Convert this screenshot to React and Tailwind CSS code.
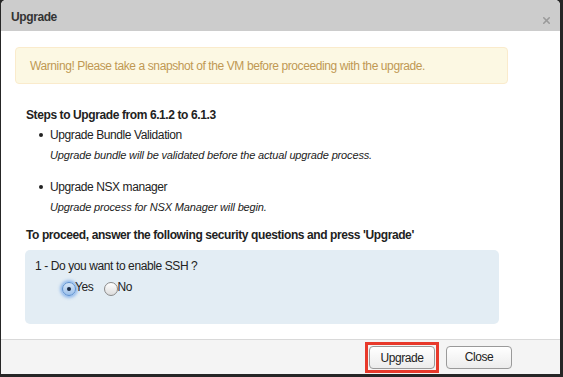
// Upgrade dialog — warning, steps list, security question and footer actions
import { X } from 'lucide-react';

const STEPS = [
  { title: 'Upgrade Bundle Validation', note: 'Upgrade bundle will be validated before the actual upgrade process.' },
  { title: 'Upgrade NSX manager', note: 'Upgrade process for NSX Manager will begin.' },
];

function Radio({ checked, label }) {
  return (
    <label className="flex items-center">
      {checked ? (
        <span className="w-[14px] h-[14px] rounded-full border border-[#5a8fd0] bg-gradient-to-b from-[#d6e6f7] to-[#9cc0ea] shadow-[0_0_3px_2px_rgba(90,150,230,0.6)] flex items-center justify-center">
          <span className="w-[4px] h-[4px] rounded-full bg-[#1b2b44]" />
        </span>
      ) : (
        <span className="w-[14px] h-[14px] rounded-full border border-[#8a8a8a] bg-gradient-to-b from-[#ffffff] to-[#dcdcdc]" />
      )}
      <span className="-ml-[1px] -mt-[5px]">{label}</span>
    </label>
  );
}

export default function App() {
  return (
    <div className="w-[563px] h-[377px] bg-[#262626] pl-[1px] pr-[3px] pb-[3px] font-['Liberation_Sans',Arial,sans-serif] text-[12px] tracking-[-0.4px] text-[#222]">
      <div className="h-full bg-white rounded-t-[5px] flex flex-col overflow-hidden">
        <div className="h-[31px] bg-[#cccccc] flex items-start justify-between pl-[10px] pr-[8px]">
          <h2 className="mt-[8px] text-[12px] font-bold text-[#333]">Upgrade</h2>
          <X size={11} strokeWidth={3.5} className="mt-[15px] text-[#9a9a9a]" />
        </div>

        <div className="flex-1 flex flex-col pl-[14px] pr-[52px]">
          <div className="mt-[16px] h-[37px] bg-[#fcf8e3] border border-[#faebcc] rounded-[4px] flex items-center pl-[14px] text-[#c09853]">
            Warning! Please take a snapshot of the VM before proceeding with the upgrade.
          </div>

          <div className="pl-[11px] pt-[23px]">
            <p className="font-bold leading-[16px]">Steps to Upgrade from 6.1.2 to 6.1.3</p>
            <ul className="pl-[24px] mt-[4px] space-y-[16px]">
              {STEPS.map(step => (
                <li key={step.title} className="relative">
                  <span className="absolute -left-[11px] top-[6px] w-[4px] h-[4px] rounded-full bg-[#222]" />
                  <p className="leading-[16px]">{step.title}</p>
                  <p className="mt-[4px] italic text-[11px] tracking-[-0.15px] leading-[16px]">{step.note}</p>
                </li>
              ))}
            </ul>
            <p className="mt-[12px] font-bold leading-[16px]">
              To proceed, answer the following security questions and press 'Upgrade'
            </p>
            <div className="mt-[7px] ml-[-1px] mr-[9px] h-[74px] bg-[#e3edf4] rounded-[5px] pl-[10px] pt-[8px]">
              <p className="leading-[16px]">1 - Do you want to enable SSH ?</p>
              <div className="mt-[8px] ml-[27px] flex items-center gap-[11px]">
                <Radio checked label="Yes" />
                <Radio label="No" />
              </div>
            </div>
          </div>
        </div>

        <div className="h-[35px] border-t border-[#d9d9d9] bg-[#f4f4f4] flex items-center justify-end pr-[48px] gap-[7px]">
          <div className="border-[3px] border-[#e8392b] p-[1px] mt-[1px]">
            <button className="w-[66px] h-[23px] rounded-[4px] border border-[#9a9a9a] bg-gradient-to-b from-white to-[#ececec] text-[12px] text-[#222]">
              Upgrade
            </button>
          </div>
          <button className="w-[66px] h-[23px] rounded-[4px] border border-[#9a9a9a] bg-gradient-to-b from-white to-[#ececec] text-[12px] text-[#222]">
            Close
          </button>
        </div>
      </div>
    </div>
  );
}
